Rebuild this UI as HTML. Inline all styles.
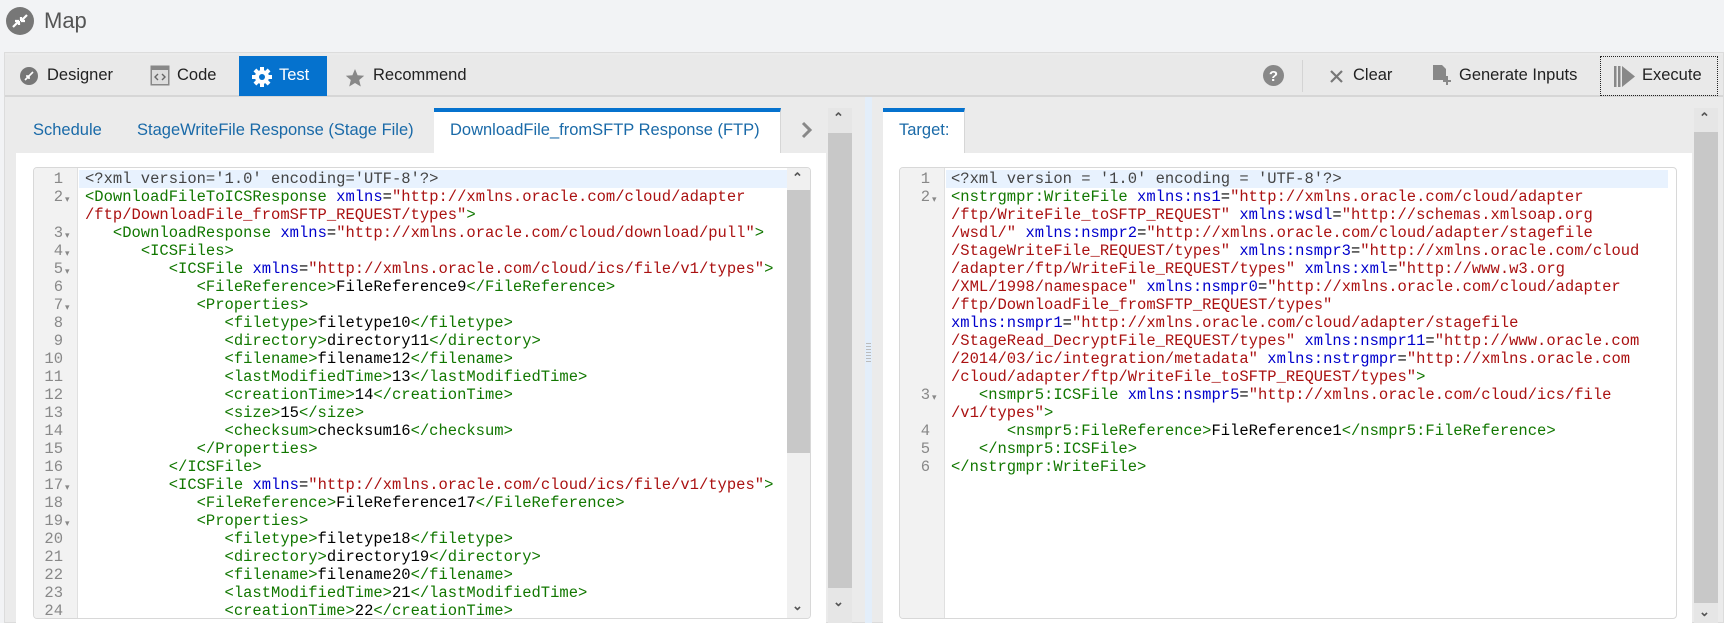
<!DOCTYPE html>
<html><head><meta charset="utf-8"><style>
*{box-sizing:border-box;margin:0;padding:0}
body{width:1724px;height:623px;overflow:hidden;background:#f2f3f5;font-family:"Liberation Sans",sans-serif;position:relative}
.abs{position:absolute}
.tb{font-size:16.5px;color:#222;position:absolute;top:66px}
.tab{position:absolute;font-size:16.5px;color:#1a6aa8;top:121px}
.ed{position:absolute;background:#fff;border:1px solid #d8d8d8;border-radius:4px;overflow:hidden}
.gut{position:absolute;left:0;top:0;bottom:0;background:#f2f2f2;border-right:1px solid #e0e0e0}
.code{position:absolute;top:2px;font-family:"Liberation Mono",monospace;font-size:15.5px;line-height:18px;white-space:pre;color:#000}
.nums{position:absolute;top:2px;font-family:"Liberation Mono",monospace;font-size:15.5px;line-height:18px;white-space:pre;color:#888;text-align:right}
.t{color:#117700}.a{color:#0000cc}.v{color:#aa1111}.d{color:#444}
.hl{position:absolute;height:18px;background:#e8f2fe}
.f{position:absolute;font-size:9px;color:#888}
.sb{position:absolute;background:#ececec}
.th{position:absolute;background:#c8c8c8}
.ar{position:absolute;font-size:13px;color:#555;font-weight:bold}
</style></head><body>
<!-- header -->
<svg class="abs" style="left:6px;top:7px" width="28" height="28"><circle cx="14" cy="14" r="14" fill="#777"/><path d="M7 20l6-6M13 14h-4M13 14v4M21 8l-6 6M15 14h4M15 14v-4" stroke="#fff" stroke-width="2.2" fill="none"/></svg>
<div class="abs" style="left:44px;top:8px;font-size:22px;color:#555">Map</div>
<!-- outer panel -->
<div class="abs" style="left:4px;top:52px;width:1720px;height:571px;background:#ebebeb;border:1px solid #dcdcdc"></div>
<div class="abs" style="left:5px;top:55px;width:1718px;height:42px;background:#e9e9e9;border-bottom:2px solid #d6d6d6"></div>
<svg class="abs" style="left:20px;top:67px" width="18" height="18"><circle cx="9" cy="9" r="9" fill="#777"/><path d="M5 13l4-4M9 9h-3M9 9v3M13 5l-4 4" stroke="#fff" stroke-width="1.6" fill="none"/></svg>
<div class="tb" style="left:47px">Designer</div>
<svg class="abs" style="left:150px;top:65px" width="20" height="21"><rect x="0.5" y="0.5" width="19" height="20" fill="#888"/><rect x="2" y="5" width="16" height="14" fill="#ddd"/><path d="M8 9l-3 3 3 3M12 9l3 3-3 3" stroke="#666" stroke-width="1.4" fill="none"/></svg>
<div class="tb" style="left:177px">Code</div>
<div class="abs" style="left:239px;top:56px;width:88px;height:40px;background:#0572ce"></div>
<svg class="abs" style="left:252px;top:67px" width="20" height="20"><g fill="#fff"><circle cx="10" cy="10" r="7"/><rect x="8" y="0" width="4" height="20"/><rect x="0" y="8" width="20" height="4"/><rect x="8" y="0" width="4" height="20" transform="rotate(45 10 10)"/><rect x="8" y="0" width="4" height="20" transform="rotate(-45 10 10)"/></g><circle cx="10" cy="10" r="3" fill="#0572ce"/></svg>
<div class="tb" style="left:279px;color:#fff">Test</div>
<svg class="abs" style="left:345px;top:68px" width="20" height="20"><path d="M10 1l2.6 6.2 6.6.5-5 4.3 1.6 6.5L10 15l-5.8 3.5 1.6-6.5-5-4.3 6.6-.5z" fill="#888"/></svg>
<div class="tb" style="left:373px">Recommend</div>
<svg class="abs" style="left:1263px;top:65px" width="21" height="21"><circle cx="10.5" cy="10.5" r="10.5" fill="#888"/><text x="10.5" y="16" font-family="Liberation Sans" font-weight="bold" font-size="15" fill="#fff" text-anchor="middle">?</text></svg>
<div class="abs" style="left:1302px;top:60px;width:1px;height:32px;background:#d4d4d4"></div>
<svg class="abs" style="left:1330px;top:70px" width="13" height="13"><path d="M1 1l11 11M12 1L1 12" stroke="#777" stroke-width="2.2"/></svg>
<div class="tb" style="left:1353px">Clear</div>
<svg class="abs" style="left:1432px;top:64px" width="20" height="22"><path d="M1 1h9l4 4v11H1z" fill="#888"/><path d="M15 12v9M11 17h8" stroke="#888" stroke-width="2"/></svg>
<div class="tb" style="left:1459px">Generate Inputs</div>
<div class="abs" style="left:1600px;top:56px;width:118px;height:40px;border:1px dotted #222"></div>
<svg class="abs" style="left:1614px;top:66px" width="24" height="21"><rect x="0" y="0" width="2.5" height="21" fill="#888"/><rect x="4" y="0" width="2.5" height="21" fill="#888"/><path d="M8 0l13 10.5L8 21z" fill="#888"/></svg>
<div class="tb" style="left:1642px">Execute</div>

<!-- left tabs -->
<div class="tab" style="left:33px">Schedule</div>
<div class="tab" style="left:137px">StageWriteFile Response (Stage File)</div>
<div class="abs" style="left:434px;top:108px;width:347px;height:46px;background:#fff;border-top:4px solid #0572ce;border-right:1px solid #d6d6d6"></div>
<div class="tab" style="left:450px">DownloadFile_fromSFTP Response (FTP)</div>
<svg class="abs" style="left:801px;top:121px" width="12" height="18"><path d="M2 2l7 7-7 7" stroke="#888" stroke-width="3" fill="none"/></svg>
<div class="abs" style="left:16px;top:153px;width:810px;height:470px;background:#fff"></div>
<div class="sb" style="left:828px;top:108px;width:24px;height:515px;background:#e6e6e6"></div>
<div class="th" style="left:828px;top:133px;width:24px;height:455px"></div>
<div class="ar" style="left:833px;top:110px">&#8963;</div>
<div class="ar" style="left:833px;top:594px">&#8964;</div>
<div class="abs" style="left:865px;top:97px;width:7px;height:526px;background:#e3eefa"></div>
<div class="abs" style="left:866px;top:343px;width:5px;height:20px;background:repeating-linear-gradient(#bbb 0 1px,transparent 1px 3px)"></div>

<!-- left editor -->
<div class="ed" style="left:33px;top:167px;width:778px;height:452px">
<div class="gut" style="width:44px"></div>
<div class="hl" style="left:45px;top:2px;width:708px"></div>
<div class="nums" style="left:0;width:29px">1
2

3
4
5
6
7
8
9
10
11
12
13
14
15
16
17
18
19
20
21
22
23
24</div>
<div class="f" style="left:31px;top:26px">&#9662;</div>
<div class="f" style="left:31px;top:62px">&#9662;</div>
<div class="f" style="left:31px;top:80px">&#9662;</div>
<div class="f" style="left:31px;top:98px">&#9662;</div>
<div class="f" style="left:31px;top:134px">&#9662;</div>
<div class="f" style="left:31px;top:314px">&#9662;</div>
<div class="f" style="left:31px;top:350px">&#9662;</div>
<div class="code" style="left:51px"><span class="d">&lt;?xml version='1.0' encoding='UTF-8'?&gt;</span>
<span class="t">&lt;DownloadFileToICSResponse</span> <span class="a">xmlns</span>=<span class="v">"http://xmlns.oracle.com/cloud/adapter</span>
<span class="v">/ftp/DownloadFile_fromSFTP_REQUEST/types"</span><span class="t">&gt;</span>
   <span class="t">&lt;DownloadResponse</span> <span class="a">xmlns</span>=<span class="v">"http://xmlns.oracle.com/cloud/download/pull"</span><span class="t">&gt;</span>
      <span class="t">&lt;ICSFiles&gt;</span>
         <span class="t">&lt;ICSFile</span> <span class="a">xmlns</span>=<span class="v">"http://xmlns.oracle.com/cloud/ics/file/v1/types"</span><span class="t">&gt;</span>
            <span class="t">&lt;FileReference&gt;</span>FileReference9<span class="t">&lt;/FileReference&gt;</span>
            <span class="t">&lt;Properties&gt;</span>
               <span class="t">&lt;filetype&gt;</span>filetype10<span class="t">&lt;/filetype&gt;</span>
               <span class="t">&lt;directory&gt;</span>directory11<span class="t">&lt;/directory&gt;</span>
               <span class="t">&lt;filename&gt;</span>filename12<span class="t">&lt;/filename&gt;</span>
               <span class="t">&lt;lastModifiedTime&gt;</span>13<span class="t">&lt;/lastModifiedTime&gt;</span>
               <span class="t">&lt;creationTime&gt;</span>14<span class="t">&lt;/creationTime&gt;</span>
               <span class="t">&lt;size&gt;</span>15<span class="t">&lt;/size&gt;</span>
               <span class="t">&lt;checksum&gt;</span>checksum16<span class="t">&lt;/checksum&gt;</span>
            <span class="t">&lt;/Properties&gt;</span>
         <span class="t">&lt;/ICSFile&gt;</span>
         <span class="t">&lt;ICSFile</span> <span class="a">xmlns</span>=<span class="v">"http://xmlns.oracle.com/cloud/ics/file/v1/types"</span><span class="t">&gt;</span>
            <span class="t">&lt;FileReference&gt;</span>FileReference17<span class="t">&lt;/FileReference&gt;</span>
            <span class="t">&lt;Properties&gt;</span>
               <span class="t">&lt;filetype&gt;</span>filetype18<span class="t">&lt;/filetype&gt;</span>
               <span class="t">&lt;directory&gt;</span>directory19<span class="t">&lt;/directory&gt;</span>
               <span class="t">&lt;filename&gt;</span>filename20<span class="t">&lt;/filename&gt;</span>
               <span class="t">&lt;lastModifiedTime&gt;</span>21<span class="t">&lt;/lastModifiedTime&gt;</span>
               <span class="t">&lt;creationTime&gt;</span>22<span class="t">&lt;/creationTime&gt;</span></div>
<div class="sb" style="left:753px;top:0;width:24px;height:452px;background:#f0f0f0"></div>
<div class="th" style="left:753px;top:22px;width:24px;height:263px"></div>
<div class="ar" style="left:758px;top:2px">&#8963;</div>
<div class="ar" style="left:758px;top:430px">&#8964;</div>
</div>

<!-- right -->
<div class="abs" style="left:883px;top:108px;width:82px;height:46px;background:#fff;border-top:4px solid #0572ce;border-right:1px solid #d6d6d6"></div>
<div class="tab" style="left:899px">Target:</div>
<div class="abs" style="left:883px;top:153px;width:809px;height:470px;background:#fff"></div>
<div class="sb" style="left:1694px;top:108px;width:24px;height:515px;background:#e6e6e6"></div>
<div class="th" style="left:1694px;top:132px;width:24px;height:471px"></div>
<div class="ar" style="left:1699px;top:110px">&#8963;</div>
<div class="ar" style="left:1699px;top:604px">&#8964;</div>
<div class="ed" style="left:899px;top:167px;width:778px;height:452px">
<div class="gut" style="width:45px"></div>
<div class="hl" style="left:46px;top:2px;width:722px"></div>
<div class="nums" style="left:0;width:30px">1
2










3

4
5
6</div>
<div class="f" style="left:32px;top:26px">&#9662;</div>
<div class="f" style="left:32px;top:224px">&#9662;</div>
<div class="code" style="left:51px"><span class="d">&lt;?xml version = '1.0' encoding = 'UTF-8'?&gt;</span>
<span class="t">&lt;nstrgmpr:WriteFile</span> <span class="a">xmlns:ns1</span>=<span class="v">"http://xmlns.oracle.com/cloud/adapter</span>
<span class="v">/ftp/WriteFile_toSFTP_REQUEST"</span> <span class="a">xmlns:wsdl</span>=<span class="v">"http://schemas.xmlsoap.org</span>
<span class="v">/wsdl/"</span> <span class="a">xmlns:nsmpr2</span>=<span class="v">"http://xmlns.oracle.com/cloud/adapter/stagefile</span>
<span class="v">/StageWriteFile_REQUEST/types"</span> <span class="a">xmlns:nsmpr3</span>=<span class="v">"http://xmlns.oracle.com/cloud</span>
<span class="v">/adapter/ftp/WriteFile_REQUEST/types"</span> <span class="a">xmlns:xml</span>=<span class="v">"http://www.w3.org</span>
<span class="v">/XML/1998/namespace"</span> <span class="a">xmlns:nsmpr0</span>=<span class="v">"http://xmlns.oracle.com/cloud/adapter</span>
<span class="v">/ftp/DownloadFile_fromSFTP_REQUEST/types"</span>
<span class="a">xmlns:nsmpr1</span>=<span class="v">"http://xmlns.oracle.com/cloud/adapter/stagefile</span>
<span class="v">/StageRead_DecryptFile_REQUEST/types"</span> <span class="a">xmlns:nsmpr11</span>=<span class="v">"http://www.oracle.com</span>
<span class="v">/2014/03/ic/integration/metadata"</span> <span class="a">xmlns:nstrgmpr</span>=<span class="v">"http://xmlns.oracle.com</span>
<span class="v">/cloud/adapter/ftp/WriteFile_toSFTP_REQUEST/types"</span><span class="t">&gt;</span>
   <span class="t">&lt;nsmpr5:ICSFile</span> <span class="a">xmlns:nsmpr5</span>=<span class="v">"http://xmlns.oracle.com/cloud/ics/file</span>
<span class="v">/v1/types"</span><span class="t">&gt;</span>
      <span class="t">&lt;nsmpr5:FileReference&gt;</span>FileReference1<span class="t">&lt;/nsmpr5:FileReference&gt;</span>
   <span class="t">&lt;/nsmpr5:ICSFile&gt;</span>
<span class="t">&lt;/nstrgmpr:WriteFile&gt;</span></div>
</div>
</body></html>
